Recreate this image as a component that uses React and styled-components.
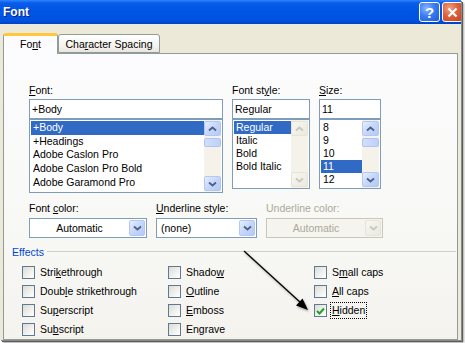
import React from 'react';
import styled, { createGlobalStyle } from 'styled-components';

const Global = createGlobalStyle`
  html, body { margin: 0; padding: 0; background: #ffffff; }
  body { font-family: "Liberation Sans", Arial, sans-serif; }
  #root { width: 465px; height: 343px; overflow: hidden; }
`;

const Window = styled.div`
  position: relative;
  width: 461px;
  height: 340px;
  background: #ece9d8;
  display: flex;
  flex-direction: column;
  box-shadow: 1px 1px 0 #8a8a8a, 2px 2px 0 #5c5c5c, 3px 3px 2px rgba(0, 0, 0, 0.35);
  overflow: hidden;
  font-size: 10.5px;
  color: #000;
`;

const TitleBar = styled.div`
  height: 24px;
  flex: none;
  display: flex;
  align-items: center;
  padding-left: 3px;
  background: linear-gradient(to bottom, #2f86ff 0%, #0a5ce9 12%, #0055e5 45%, #0053e0 85%, #0042c4 100%);
`;

const Title = styled.div`
  font-family: "Liberation Sans", Arial, sans-serif;
  font-weight: bold;
  font-size: 12px;
  color: #fff;
  text-shadow: 1px 1px 0 #0a1c8a;
`;

const TitleButtons = styled.div`
  margin-left: auto;
  margin-right: -2px;
  display: flex;
  gap: 2px;
`;

const CaptionButton = styled.div`
  width: 21px;
  height: 20px;
  box-sizing: border-box;
  border: 1px solid #ffffff;
  border-radius: 3px;
  display: flex;
  align-items: center;
  justify-content: center;
  color: #fff;
  font-weight: bold;
  font-size: 15px;
  background: ${(p) =>
    p.$close
      ? 'radial-gradient(circle at 35% 30%, #f0a080 0%, #e0623c 45%, #c2401c 100%)'
      : 'radial-gradient(circle at 35% 30%, #8cb6ff 0%, #3b7cf2 45%, #1f5cd6 100%)'};
`;

const Body = styled.div`
  flex: 1;
  display: flex;
  flex-direction: column;
  padding: 9px 3px 1px 3px;
`;

const Tabs = styled.div`
  display: flex;
  align-items: flex-end;
  height: 21px;
  position: relative;
  z-index: 1;
`;

const Tab = styled.div`
  box-sizing: border-box;
  width: ${(p) => p.$w}px;
  height: ${(p) => (p.$active ? 21 : 19)}px;
  margin-bottom: ${(p) => (p.$active ? 0 : 1)}px;
  border: 1px solid #919b9c;
  border-bottom: ${(p) => (p.$active ? 'none' : '1px solid #919b9c')};
  border-top: ${(p) => (p.$active ? '3px solid #ffc83c' : '1px solid #919b9c')};
  border-radius: 3px 3px 0 0;
  background: ${(p) => (p.$active ? '#fcfcfe' : 'linear-gradient(to bottom, #ffffff 0%, #f3f2ec 70%, #e8e6dc 100%)')};
  display: flex;
  align-items: center;
  justify-content: center;
  padding-bottom: ${(p) => (p.$active ? 2 : 0)}px;
  white-space: nowrap;
`;

const Panel = styled.div`
  flex: 1;
  margin-top: -1px;
  border: 1px solid #919b9c;
  background: linear-gradient(to bottom, #fcfcfe 0%, #f8f8f5 60%, #f4f3ee 100%);
  padding: 30px 0 0 8px;
  display: flex;
  flex-direction: column;
`;

const FieldRow = styled.div`
  display: flex;
  align-items: flex-start;
  gap: 9px;
  margin-left: 17px;
  margin-top: ${(p) => p.$mt || 0}px;
`;

const Field = styled.div`
  display: flex;
  flex-direction: column;
  width: ${(p) => p.$w}px;
`;

const Label = styled.div`
  height: 13px;
  line-height: 13px;
  margin-bottom: ${(p) => p.$mb}px;
  color: ${(p) => (p.$disabled ? '#aca899' : '#000')};
  white-space: nowrap;
`;

const U = styled.span`
  text-decoration: underline;
`;

const TextInput = styled.div`
  box-sizing: border-box;
  height: 20px;
  border: 1px solid #7f9db9;
  background: #fff;
  padding-left: 2px;
  line-height: 18px;
`;

const ListBox = styled.div`
  box-sizing: border-box;
  height: ${(p) => p.$h}px;
  border: 1px solid #7f9db9;
  background: #fff;
  display: flex;
`;

const Items = styled.div`
  flex: 1;
  padding: 1px 0 0 1px;
  overflow: hidden;
`;

const Item = styled.div`
  height: ${(p) => p.$rh}px;
  line-height: ${(p) => p.$rh}px;
  padding-left: 2px;
  white-space: nowrap;
  background: ${(p) => (p.$sel ? '#316ac5' : 'transparent')};
  color: ${(p) => (p.$sel ? '#fff' : '#000')};
`;

const ScrollBar = styled.div`
  width: 17px;
  margin-right: 1px;
  padding: 1px 0;
  display: flex;
  flex-direction: column;
  background: #f5f3e9;
`;

const ScrollBtn = styled.div`
  box-sizing: border-box;
  height: 15px;
  border: 1px solid ${(p) => (p.$disabled ? '#e6e4d9' : '#b3c7f5')};
  border-radius: 2px;
  background: ${(p) =>
    p.$disabled
      ? 'linear-gradient(135deg, #f7f6f1, #ebe9e0)'
      : 'linear-gradient(135deg, #e6eefe 0%, #c6d6fb 50%, #b4c9f7 100%)'};
  display: flex;
  align-items: center;
  justify-content: center;
`;

const Thumb = styled.div`
  box-sizing: border-box;
  height: 9px;
  margin-top: 2px;
  border: 1px solid ${(p) => (p.$disabled ? 'transparent' : '#b0c4f2')};
  border-radius: 2px;
  background: ${(p) => (p.$disabled ? 'transparent' : 'linear-gradient(to right, #d2defd, #bfd0fa)')};
`;

const Track = styled.div`
  flex: 1;
`;

const Combo = styled.div`
  box-sizing: border-box;
  height: 20px;
  border: 1px solid ${(p) => (p.$disabled ? '#c9c7ba' : '#7f9db9')};
  background: ${(p) => (p.$disabled ? '#f5f4ee' : '#fff')};
  display: flex;
  align-items: center;
`;

const ComboValue = styled.div`
  flex: 1;
  text-align: ${(p) => (p.$center ? 'center' : 'left')};
  padding-left: ${(p) => (p.$center ? 0 : 4)}px;
  color: ${(p) => (p.$disabled ? '#aca899' : '#000')};
`;

const DropBtn = styled(ScrollBtn)`
  width: 16px;
  height: 16px;
  margin-right: 1px;
`;

const EffectsHeader = styled.div`
  display: flex;
  align-items: center;
  gap: 3px;
  height: 13px;
  margin-top: 7px;
  color: #0046d5;
`;

const Rule = styled.div`
  flex: 1;
  height: 1px;
  background: #d0d0bf;
  margin-right: 1px;
`;

const CheckGrid = styled.div`
  display: grid;
  grid-template-columns: repeat(3, 146px);
  grid-template-rows: repeat(4, 19px);
  grid-auto-flow: column;
  margin: 5px 0 0 10px;
`;

const CheckItem = styled.div`
  display: flex;
  align-items: center;
  gap: 4px;
`;

const Box = styled.div`
  box-sizing: border-box;
  width: 13px;
  height: 13px;
  border: 1px solid #5f7893;
  background: linear-gradient(135deg, #dcdcd6 0%, #f2f2ee 60%, #ffffff 100%);
  display: flex;
  align-items: center;
  justify-content: center;
`;

const CheckLabel = styled.span`
  line-height: 15px;
  padding: 0 1px;
  outline: ${(p) => (p.$focus ? '1px dotted #000' : 'none')};
`;

const Overlay = styled.svg`
  position: absolute;
  left: 0;
  top: 0;
  pointer-events: none;
`;

const Chevron = ({ down, disabled }) => (
  <svg width="9" height="6" viewBox="0 0 9 6">
    <polyline
      points={down ? '1,1.5 4.5,4.5 8,1.5' : '1,4.5 4.5,1.5 8,4.5'}
      fill="none"
      stroke={disabled ? '#c9c7ba' : '#4d6185'}
      strokeWidth="1.8"
    />
  </svg>
);

const Scroll = ({ disabled }) => (
  <ScrollBar>
    <ScrollBtn $disabled={disabled}>
      <Chevron disabled={disabled} />
    </ScrollBtn>
    <Thumb $disabled={disabled} />
    <Track />
    <ScrollBtn $disabled={disabled}>
      <Chevron down disabled={disabled} />
    </ScrollBtn>
  </ScrollBar>
);

const List = ({ h, rh, items, sel, disabledScroll }) => (
  <ListBox $h={h}>
    <Items>
      {items.map((t) => (
        <Item key={t} $rh={rh} $sel={t === sel}>
          {t}
        </Item>
      ))}
    </Items>
    <Scroll disabled={disabledScroll} />
  </ListBox>
);

const Check = ({ label, checked, focus }) => (
  <CheckItem>
    <Box>
      {checked && (
        <svg width="9" height="8" viewBox="0 0 9 8">
          <polyline points="1,4 3.5,6.5 8,1.5" fill="none" stroke="#21a121" strokeWidth="2" />
        </svg>
      )}
    </Box>
    <CheckLabel $focus={focus}>{label}</CheckLabel>
  </CheckItem>
);

const mn = (before, letter, after) => (
  <>
    {before}
    <U>{letter}</U>
    {after}
  </>
);

export default function App() {
  return (
    <>
      <Global />
      <Window>
        <TitleBar>
          <Title>Font</Title>
          <TitleButtons>
            <CaptionButton>?</CaptionButton>
            <CaptionButton $close>
              <svg width="11" height="11" viewBox="0 0 11 11">
                <path d="M1.5 1.5 L9.5 9.5 M9.5 1.5 L1.5 9.5" stroke="#fff" strokeWidth="2.2" />
              </svg>
            </CaptionButton>
          </TitleButtons>
        </TitleBar>
        <Body>
          <Tabs>
            <Tab $active $w={55}>{mn('Fo', 'n', 't')}</Tab>
            <Tab $w={102}>{mn('Cha', 'r', 'acter Spacing')}</Tab>
          </Tabs>
          <Panel>
            <FieldRow>
              <Field $w={194}>
                <Label $mb={2}>{mn('', 'F', 'ont:')}</Label>
                <TextInput>+Body</TextInput>
                <List
                  h={74}
                  rh={13.7}
                  sel="+Body"
                  items={['+Body', '+Headings', 'Adobe Caslon Pro', 'Adobe Caslon Pro Bold', 'Adobe Garamond Pro']}
                />
              </Field>
              <Field $w={78}>
                <Label $mb={2}>{mn('Font st', 'y', 'le:')}</Label>
                <TextInput>Regular</TextInput>
                <List h={70} rh={13} sel="Regular" disabledScroll items={['Regular', 'Italic', 'Bold', 'Bold Italic']} />
              </Field>
              <Field $w={62}>
                <Label $mb={2}>{mn('', 'S', 'ize:')}</Label>
                <TextInput>11</TextInput>
                <List h={70} rh={13} sel="11" items={['8', '9', '10', '11', '12']} />
              </Field>
            </FieldRow>
            <FieldRow $mt={9}>
              <Field $w={118}>
                <Label $mb={3}>{mn('Font ', 'c', 'olor:')}</Label>
                <Combo>
                  <ComboValue $center>Automatic</ComboValue>
                  <DropBtn>
                    <Chevron down />
                  </DropBtn>
                </Combo>
              </Field>
              <Field $w={101}>
                <Label $mb={3}>{mn('', 'U', 'nderline style:')}</Label>
                <Combo>
                  <ComboValue>(none)</ComboValue>
                  <DropBtn>
                    <Chevron down />
                  </DropBtn>
                </Combo>
              </Field>
              <Field $w={117}>
                <Label $mb={3} $disabled>Underline color:</Label>
                <Combo $disabled>
                  <ComboValue $center $disabled>Automatic</ComboValue>
                  <DropBtn $disabled>
                    <Chevron down disabled />
                  </DropBtn>
                </Combo>
              </Field>
            </FieldRow>
            <EffectsHeader>
              Effects
              <Rule />
            </EffectsHeader>
            <CheckGrid>
              <Check label={mn('Stri', 'k', 'ethrough')} />
              <Check label={mn('Doub', 'l', 'e strikethrough')} />
              <Check label={mn('Su', 'p', 'erscript')} />
              <Check label={mn('Su', 'b', 'script')} />
              <Check label={mn('Shado', 'w', '')} />
              <Check label={mn('', 'O', 'utline')} />
              <Check label={mn('', 'E', 'mboss')} />
              <Check label={mn('En', 'g', 'rave')} />
              <Check label={mn('S', 'm', 'all caps')} />
              <Check label={mn('', 'A', 'll caps')} />
              <Check label={mn('', 'H', 'idden')} checked focus />
            </CheckGrid>
          </Panel>
        </Body>
        <Overlay width="465" height="343" viewBox="0 0 465 343">
          <defs>
            <filter id="sh" x="-20%" y="-20%" width="140%" height="140%">
              <feDropShadow dx="1" dy="1.5" stdDeviation="1" floodColor="#000" floodOpacity="0.35" />
            </filter>
          </defs>
          <g filter="url(#sh)">
            <line x1="244" y1="251" x2="301" y2="303" stroke="#000" strokeWidth="1.3" />
            <polygon points="308,310 296,305.5 302.5,298.5" fill="#000" />
          </g>
        </Overlay>
      </Window>
    </>
  );
}
